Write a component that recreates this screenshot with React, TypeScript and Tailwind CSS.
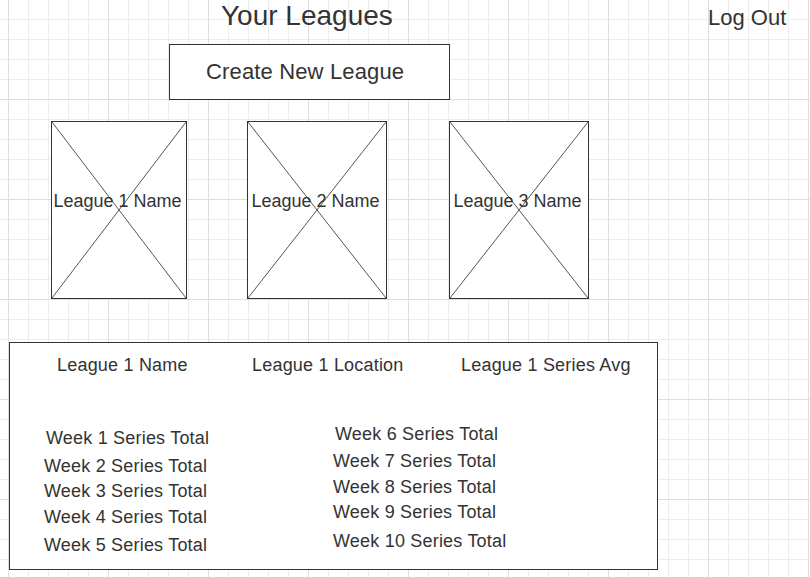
const font = { fontFamily: '"Liberation Sans", Arial, sans-serif' };

function Placeholder({ label, width }: { label: string; width: string }) {
  return (
    <div className={`relative ${width} h-[178px] border border-[#333] bg-white`}>
      <svg className="absolute inset-0 w-full h-full" viewBox="0 0 100 100" preserveAspectRatio="none">
        <line x1="0" y1="0" x2="100" y2="100" stroke="#555" strokeWidth="1" vectorEffect="non-scaling-stroke" />
        <line x1="100" y1="0" x2="0" y2="100" stroke="#555" strokeWidth="1" vectorEffect="non-scaling-stroke" />
      </svg>
      <div className="relative flex justify-center pt-[68px] pr-[3px]">
        <span className="whitespace-nowrap text-[18px] leading-[22px] text-[#333]">{label}</span>
      </div>
    </div>
  );
}

export default function App() {
  return (
    <div
      style={font}
      className="relative w-[810px] h-[577px] overflow-hidden bg-white text-[#333] [background-image:linear-gradient(to_right,#dedede_1px,transparent_1px),linear-gradient(to_bottom,#dedede_1px,transparent_1px),linear-gradient(to_right,#ededed_1px,transparent_1px),linear-gradient(to_bottom,#ededed_1px,transparent_1px)] [background-size:100px_100px,100px_100px,20px_20px,20px_20px] [background-position:8px_-1px,8px_-1px,8px_-1px,8px_-1px]"
    >
      {/* header */}
      <div className="flex items-start h-[44px]">
        <div className="ml-[221px] w-[487px] mt-[1px] text-[28px] leading-[30px] whitespace-nowrap">Your Leagues</div>
        <div className="mt-[5px] text-[22px] leading-[26px] whitespace-nowrap">Log Out</div>
      </div>

      <button className="ml-[169px] w-[281px] h-[56px] border border-[#333] bg-white flex items-center pl-[36px] text-[22px] leading-[26px] tracking-[0.15px] text-[#333]">
        Create New League
      </button>

      {/* league cards */}
      <div className="flex mt-[21px]">
        <div className="ml-[51px]">
          <Placeholder label="League 1 Name" width="w-[136px]" />
        </div>
        <div className="ml-[60px]">
          <Placeholder label="League 2 Name" width="w-[140px]" />
        </div>
        <div className="ml-[62px]">
          <Placeholder label="League 3 Name" width="w-[140px]" />
        </div>
      </div>

      {/* details */}
      <div className="ml-[9px] mt-[43px] w-[649px] h-[228px] border border-[#333] bg-white flex flex-col text-[18px] leading-[22px] tracking-[0.2px]">
        <div className="flex pt-[11px] whitespace-nowrap">
          <div className="ml-[47px] w-[195px]">League 1 Name</div>
          <div className="w-[209px]">League 1 Location</div>
          <div>League 1 Series Avg</div>
        </div>
        <div className="flex items-start whitespace-nowrap">
          <div className="ml-[34px] w-[289px] flex flex-col">
            <div className="mt-[51px] ml-[2px]">Week 1 Series Total</div>
            <div className="mt-[6px]">Week 2 Series Total</div>
            <div className="mt-[3px]">Week 3 Series Total</div>
            <div className="mt-[4px]">Week 4 Series Total</div>
            <div className="mt-[6px]">Week 5 Series Total</div>
          </div>
          <div className="flex flex-col">
            <div className="mt-[47px] ml-[2px]">Week 6 Series Total</div>
            <div className="mt-[5px]">Week 7 Series Total</div>
            <div className="mt-[4px]">Week 8 Series Total</div>
            <div className="mt-[3px]">Week 9 Series Total</div>
            <div className="mt-[7px]">Week 10 Series Total</div>
          </div>
        </div>
      </div>
    </div>
  );
}
